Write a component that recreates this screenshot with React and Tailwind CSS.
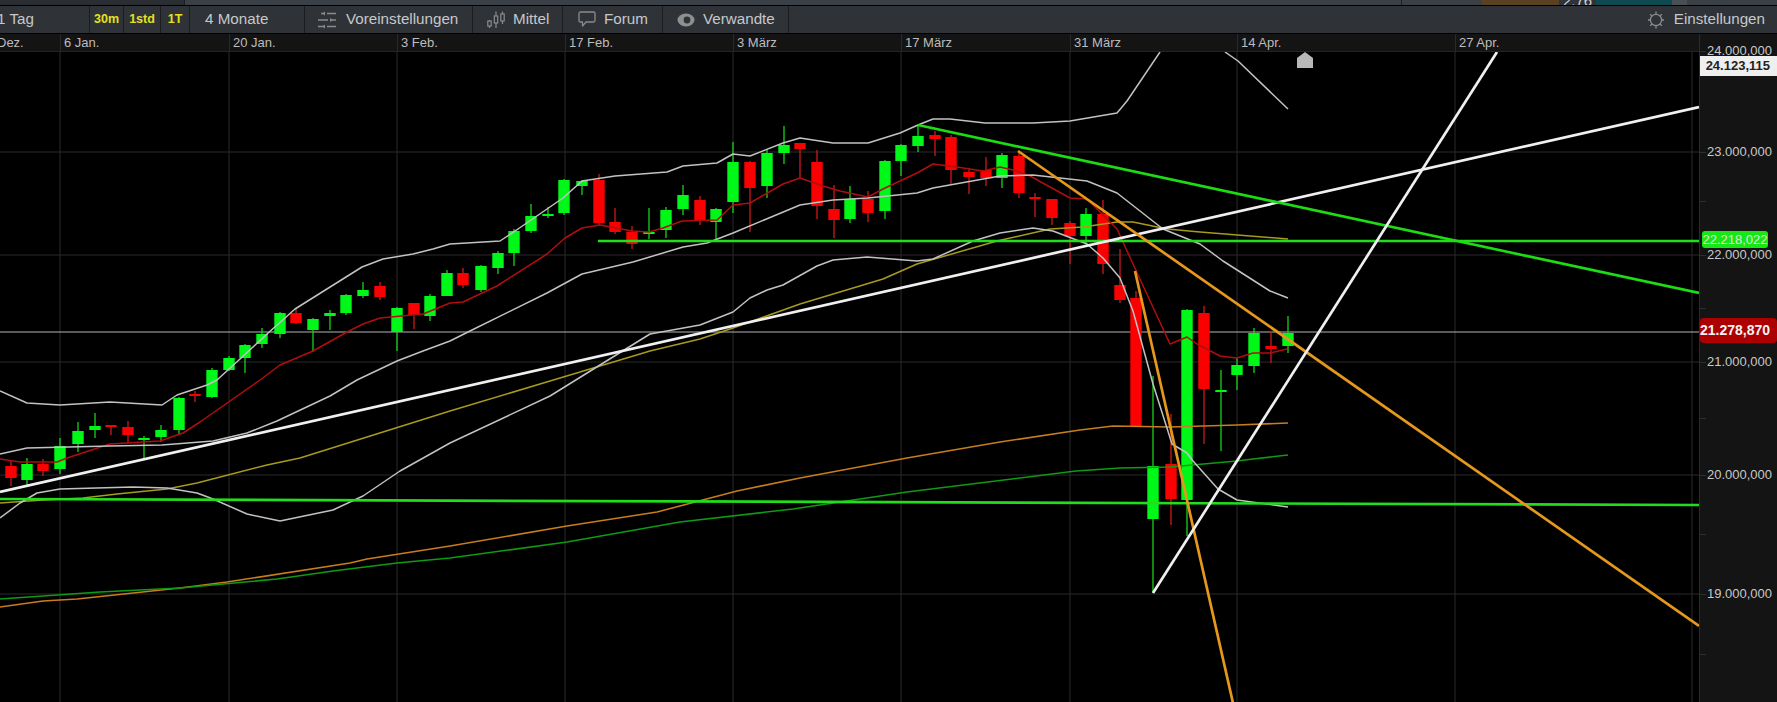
const CANDLES = [
  [11,"r",460,465,477,485],[27,"g",457,463,479,484],[43,"r",458,463,470,475],[60,"g",437,445,468,473],
  [78,"g",421,430,443,451],[95,"g",412,425,429,437],[111,"r",424,424,426,434],[128,"r",420,426,434,441],
  [144,"g",435,437,438,458],[161,"g",424,429,436,441],[179,"g",396,397,429,434],[195,"r",390,393,395,401],
  [212,"g",367,369,396,397],[229,"g",355,357,369,370],[245,"g",343,344,357,372],[262,"g",327,333,343,347],
  [280,"g",311,312,333,337],[296,"r",308,312,322,323],[313,"g",317,318,329,351],[330,"g",309,312,315,329],
  [346,"g",293,294,312,314],[363,"g",281,289,295,297],[380,"r",281,285,296,299],[397,"g",306,307,331,350],
  [414,"r",302,302,314,328],[430,"g",293,295,315,320],[447,"g",269,272,295,295],[463,"r",267,272,284,287],
  [481,"g",264,265,289,291],[498,"g",250,252,267,273],[514,"g",228,230,252,265],[531,"g",203,215,230,232],
  [548,"g",206,213,215,217],[564,"g",178,179,212,214],[582,"g",179,180,185,194],[599,"r",173,179,222,225],
  [615,"r",207,221,231,233],[632,"r",225,231,243,248],[649,"g",207,231,233,238],[666,"g",206,209,229,237],
  [683,"g",184,194,208,214],[700,"r",195,199,220,224],[716,"g",207,208,221,238],[733,"g",141,161,201,212],
  [750,"r",160,161,187,231],[767,"g",148,152,185,197],[784,"g",125,144,152,163],[800,"r",142,142,148,178],
  [817,"r",149,161,205,218],[834,"r",184,208,219,237],[850,"g",185,198,218,222],[868,"r",190,198,212,221],
  [885,"g",159,160,210,218],[901,"g",143,144,160,175],[918,"g",125,135,145,151],[935,"r",130,134,138,155],
  [951,"r",134,136,169,183],[969,"r",167,171,176,193],[986,"r",156,169,177,185],[1002,"g",152,154,177,187],
  [1019,"r",150,155,192,197],[1035,"r",192,196,197,216],[1052,"r",198,198,217,224],[1070,"r",220,222,235,263],
  [1086,"g",207,213,235,243],[1103,"r",199,213,263,273],[1120,"r",248,284,299,302],[1136,"r",290,297,425,425],
  [1153,"g",375,465,518,592],[1171,"r",413,463,498,524],[1187,"g",308,309,499,535],[1204,"r",305,312,388,443],
  [1221,"g",369,389,391,450],[1237,"g",357,364,374,389],[1254,"g",327,332,365,372],[1271,"r",330,345,348,362],
  [1288,"g",315,332,345,352],
];

const UPPER = "0,390 27,402 60,404 110,401 162,404 177,394 207,384 217,379 240,358 267,333 295,308 362,266 383,258 413,253 433,248 450,243 500,240 518,228 563,197 582,180 615,175 667,171 683,165 717,162 733,153 750,155 783,142 800,137 833,142 868,142 900,132 918,124 933,118 950,118 985,122 1033,122 1070,120 1117,112 1127,100 1160,51";
const UPPER2 = "1225,51 1238,60 1288,108";
const MID = "0,453 27,447 110,445 162,444 213,440 247,432 277,420 330,395 357,379 397,360 423,350 450,340 470,330 547,292 582,273 633,261 683,246 707,242 733,232 800,204 833,199 868,197 917,192 933,187 1000,175 1033,174 1087,180 1117,192 1163,228 1200,243 1223,260 1270,290 1288,297";
const LOWER = "0,517 20,502 37,492 60,488 133,486 167,487 197,492 213,498 247,513 280,520 333,509 363,495 400,470 450,442 550,395 650,333 700,324 733,311 750,297 767,289 783,284 817,265 833,259 867,256 917,260 933,258 973,240 1000,232 1033,227 1053,230 1087,243 1103,257 1120,277 1133,310 1153,383 1172,443 1187,452 1193,460 1218,488 1237,499 1288,506";
const RED = "0,458 20,461 57,461 67,457 110,443 143,441 160,440 183,432 200,421 260,379 280,364 313,350 347,331 363,323 380,317 423,313 450,302 463,301 497,285 547,253 565,237 582,227 600,224 632,230 649,231 663,227 682,220 717,219 733,204 750,202 783,183 800,177 823,185 840,190 868,196 883,188 900,180 917,172 933,163 957,166 983,170 1000,166 1013,169 1030,175 1070,197 1087,198 1117,228 1133,263 1170,343 1187,336 1197,343 1220,355 1237,357 1253,352 1270,352 1287,348";
const YELLOW = "0,502 43,499 83,497 117,493 167,488 197,482 267,464 300,457 367,436 450,410 550,380 650,350 700,338 733,327 800,303 883,278 917,263 997,240 1050,228 1083,226 1117,221 1133,221 1167,228 1200,231 1288,238";
const ORANGE = "0,606 43,600 77,598 180,587 227,581 350,562 367,558 450,545 567,525 657,511 737,490 800,477 907,457 1000,441 1080,429 1113,425 1170,426 1237,424 1288,422";
const GREEN = "0,598 100,591 140,589 180,587 277,578 333,570 397,562 450,557 567,541 680,521 793,508 907,491 1076,470 1120,467 1170,466 1237,460 1253,458 1288,454";

const VGRID = [60, 229, 397, 565, 733, 901, 1070, 1237, 1455, 1692];
const HGRID = [151, 254, 361, 474, 593];

function Chart() {
  return (
    <svg viewBox="0 51 1699 651" className="block w-[1699px] h-[651px]" fill="none">
      {VGRID.map((x) => <line key={x} x1={x} x2={x} y1="51" y2="702" stroke="#2a2a2a" strokeWidth="1" />)}
      {HGRID.map((y) => <line key={y} x1="0" x2="1699" y1={y} y2={y} stroke="#2a2a2a" strokeWidth="1" />)}
      <line x1="0" x2="1699" y1="331" y2="331" stroke="#b4b4b4" strokeWidth="1.2" />
      {CANDLES.map(([x, c, h, t, b, l]) => (
        <g key={x}>
          <line x1={x} x2={x} y1={h} y2={l} stroke={c === "g" ? "#16d416" : "#d01818"} strokeWidth="1.3" />
          <rect x={x - 5.7} y={t} width="11.4" height={Math.max(b - t, 2)} fill={c === "g" ? "#00f818" : "#fb0000"} />
        </g>
      ))}
      <polyline points={ORANGE} stroke="#c67d1d" strokeWidth="1.6" strokeLinejoin="round" />
      <polyline points={GREEN} stroke="#0f9a14" strokeWidth="1.6" strokeLinejoin="round" />
      <polyline points={YELLOW} stroke="#a89a1c" strokeWidth="1.5" strokeLinejoin="round" />
      <polyline points={RED} stroke="#b00e0e" strokeWidth="1.5" strokeLinejoin="round" />
      <polyline points={UPPER} stroke="#c2c2c2" strokeWidth="1.5" strokeLinejoin="round" />
      <polyline points={UPPER2} stroke="#c2c2c2" strokeWidth="1.5" strokeLinejoin="round" />
      <polyline points={MID} stroke="#c2c2c2" strokeWidth="1.5" strokeLinejoin="round" />
      <polyline points={LOWER} stroke="#c2c2c2" strokeWidth="1.5" strokeLinejoin="round" />
      <line x1="598" y1="240" x2="1699" y2="240" stroke="#22dd1c" strokeWidth="2.7" />
      <line x1="0" y1="498" x2="1699" y2="504" stroke="#22dd1c" strokeWidth="2.7" />
      <line x1="0" y1="491" x2="1699" y2="106" stroke="#f0f0f0" strokeWidth="2.7" />
      <line x1="918" y1="124" x2="1699" y2="292" stroke="#1edc14" strokeWidth="2.7" />
      <line x1="1018" y1="150" x2="1699" y2="625" stroke="#e6981c" strokeWidth="2.7" />
      <line x1="1135" y1="270" x2="1233" y2="702" stroke="#e6981c" strokeWidth="2.7" />
      <line x1="1153" y1="592" x2="1497" y2="51" stroke="#f0f0f0" strokeWidth="2.7" />
      <polygon points="1297,67 1297,57 1305,51 1313,57 1313,67" fill="#b8b8b8" />
    </svg>
  );
}

const Sliders = () => (
  <svg width="19" height="18" viewBox="0 0 19 18" fill="none" stroke="#8a8a8a" strokeWidth="1.6">
    <path d="M3 2.5H5M9 2.5H18" />
    <path d="M7 0.5L4 2.5L7 4.5Z" fill="#8a8a8a" stroke="none" />
    <path d="M0 9H10M14 9H18" />
    <path d="M12 7L15 9L12 11Z" fill="#8a8a8a" stroke="none" />
    <path d="M0 15.5H5M9 15.5H18" />
    <path d="M7 13.5L4 15.5L7 17.5Z" fill="#8a8a8a" stroke="none" />
  </svg>
);
const CandleIcon = () => (
  <svg width="18" height="18" viewBox="0 0 18 18" fill="none" stroke="#8a8a8a" strokeWidth="1.2">
    <path d="M2.5 9V10M2.5 15V17M9 0.5V5M9 12V17M15.5 0.5V3M15.5 10V13" />
    <rect x="0.8" y="10" width="3.4" height="5" />
    <rect x="7.3" y="5" width="3.4" height="7" />
    <rect x="13.8" y="3" width="3.4" height="7" />
  </svg>
);
const Bubble = () => (
  <svg width="18" height="17" viewBox="0 0 18 17" fill="none" stroke="#8a8a8a" strokeWidth="1.3" strokeLinejoin="round">
    <path d="M2.5 1H15.5Q17 1 17 2.5V9.5Q17 11 15.5 11H8L4.5 15V11H2.5Q1 11 1 9.5V2.5Q1 1 2.5 1Z" />
  </svg>
);
const Eye = () => (
  <svg width="18" height="14" viewBox="0 0 18 14">
    <path d="M9 0.5A8.5 6.5 0 1 0 9 13.5A8.5 6.5 0 1 0 9 0.5Z" fill="#8f8f8f" />
    <circle cx="10" cy="7" r="3.4" fill="#2f3338" />
  </svg>
);
const Gear = () => (
  <svg width="18" height="18" viewBox="0 0 18 18" fill="none" stroke="#8a8a8a" strokeWidth="1.3">
    <circle cx="9" cy="9" r="5.6" />
    <path d="M9 0.5V3.4M9 14.6V17.5M1 9H3.4M14.6 9H17M3.2 3.2L5 5M13 13L14.8 14.8M14.8 3.2L13 5M5 13L3.2 14.8" />
  </svg>
);

function TopStrip() {
  return (
    <div className="flex h-[6px] bg-[#3b3f46] border-b border-black overflow-hidden">
      <div className="w-[185px] bg-[#2a2d32] border-r border-[#1c1e22]" />
      <div className="w-[1217px] border-r border-[#1c1e22]" />
      <div className="w-[80px] bg-[#3b3f46]" />
      <div className="w-[77px] bg-[#5a4122]" />
      <div className="w-[37px] flex items-end justify-center bg-[#2f3338] text-[15px] leading-[14px] text-[#d0d0d0]"><span className="-mb-[3px]">2,76</span></div>
      <div className="w-[76px] bg-[#0f4a50]" />
      <div className="w-[15px] bg-[#4a4e55]" />
    </div>
  );
}

function ToolBtn({ w, children, className = "" }) {
  return (
    <div className={`h-full flex items-center border-r border-[#1a1c20] shrink-0 ${w} ${className}`}>
      {children}
    </div>
  );
}

function Toolbar() {
  return (
    <div className="flex h-[28px] bg-[#2f3338] border-b border-black text-[15.2px] text-[#c6c8ca]">
      <ToolBtn w="w-[90px]"><span className="-ml-[3px]">1 Tag</span></ToolBtn>
      <ToolBtn w="w-[34px]" className="justify-center font-bold text-[12.5px] text-[#e6e01e]">30m</ToolBtn>
      <ToolBtn w="w-[37px]" className="justify-center font-bold text-[12.5px] text-[#e6e01e]">1std</ToolBtn>
      <ToolBtn w="w-[29px]" className="justify-center font-bold text-[12.5px] text-[#e6e01e]">1T</ToolBtn>
      <ToolBtn w="w-[115px]" className="pl-[15px]">4 Monate</ToolBtn>
      <ToolBtn w="w-[168px]" className="pl-[13px] gap-[9px]"><Sliders />Voreinstellungen</ToolBtn>
      <ToolBtn w="w-[90px]" className="pl-[14px] gap-[8px]"><CandleIcon />Mittel</ToolBtn>
      <ToolBtn w="w-[100px]" className="pl-[15px] gap-[8px]"><Bubble />Forum</ToolBtn>
      <ToolBtn w="w-[126px]" className="pl-[14px] gap-[8px]"><Eye />Verwandte</ToolBtn>
      <div className="flex-1 flex items-center justify-end gap-[9px] pr-[12px]"><Gear />Einstellungen</div>
    </div>
  );
}

function DateHeader() {
  const cells = [
    ["w-[60px]", "Dez.", "-ml-[3px]"],
    ["w-[169px]", "6 Jan.", "ml-[3px]"],
    ["w-[168px]", "20 Jan.", "ml-[3px]"],
    ["w-[168px]", "3 Feb.", "ml-[3px]"],
    ["w-[168px]", "17 Feb.", "ml-[3px]"],
    ["w-[168px]", "3 März", "ml-[3px]"],
    ["w-[169px]", "17 März", "ml-[3px]"],
    ["w-[167px]", "31 März", "ml-[3px]"],
    ["w-[218px]", "14 Apr.", "ml-[3px]"],
    ["w-[237px]", "27 Apr.", "ml-[3px]"],
  ];
  return (
    <div className="flex h-[18px] bg-[#141414] border-b border-[#242424] text-[13px] text-[#bdbdbd]">
      {cells.map(([w, t, m], i) => (
        <div key={t} className={`${w} shrink-0 h-full flex items-center overflow-hidden ${i ? "border-l border-[#2a2a2a]" : ""}`}>
          <span className={`${m} whitespace-nowrap`}>{t}</span>
        </div>
      ))}
    </div>
  );
}

const TICKS = [
  [50, "24.000,000"], [151, "23.000,000"], [200, null], [254, "22.000,000"], [307, null],
  [361, "21.000,000"], [417, null], [474, "20.000,000"], [533, null], [593, "19.000,000"], [653, null],
];

function Axis() {
  return (
    <div className="relative w-[78px] h-[669px] overflow-hidden bg-[#141414] border-l border-[#2c2c2c]">
      <div className="flex flex-col">
        {TICKS.map(([y, label], i) => {
          const prev = i === 0 ? 33 : (TICKS[i - 1][0] + y) / 2;
          const next = i === TICKS.length - 1 ? 702 : (TICKS[i + 1][0] + y) / 2;
          return (
            <div key={y} className="relative shrink-0" style={{ height: next - prev }}>
              <div className="absolute left-0 w-[6px] h-px bg-[#2e2e2e]" style={{ top: y - prev }} />
              {label && (
                <span className="absolute left-[7px] -translate-y-1/2 text-[13px] leading-none text-[#c8c8c8] whitespace-nowrap" style={{ top: y - prev - 1 }}>
                  {label}
                </span>
              )}
            </div>
          );
        })}
      </div>
      <div className="absolute left-0 right-0 top-[22px] h-[20px] flex items-center justify-end pr-[7px] bg-[#efefef] text-[13px] font-bold text-[#222]">24.123,115</div>
      <div className="absolute left-[2px] top-[197px] w-[66px] h-[17px] flex items-center justify-center rounded-[3px] bg-[#16e816] text-[13px] text-[#dfe8df]">22.218,022</div>
      <div className="absolute left-0 right-0 top-[284px] h-[25px] flex items-center justify-end pr-[7px] rounded-[4px] bg-[#ad0000] text-[14px] font-bold text-[#f4f4f4]">21.278,870</div>
    </div>
  );
}

export default function App() {
  return (
    <div className="w-[1777px] h-[702px] overflow-hidden bg-black font-['Liberation_Sans',Arial,sans-serif]">
      <TopStrip />
      <Toolbar />
      <div className="flex">
        <div className="w-[1699px] shrink-0">
          <DateHeader />
          <Chart />
        </div>
        <Axis />
      </div>
    </div>
  );
}
